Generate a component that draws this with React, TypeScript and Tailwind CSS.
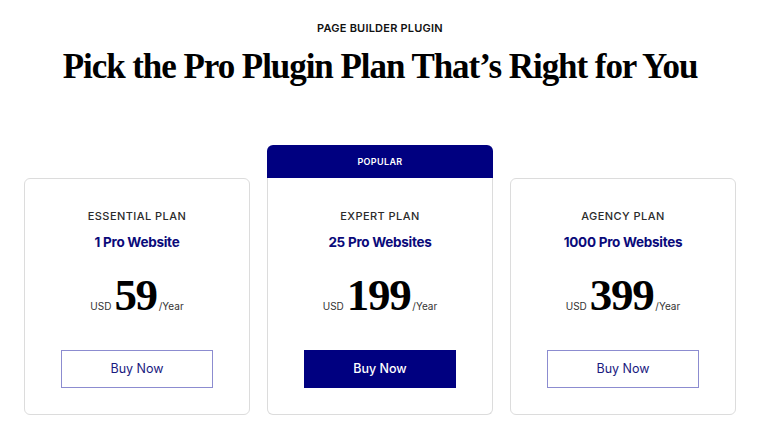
import React from 'react'

const plans = [
  { name: 'ESSENTIAL PLAN', sites: '1 Pro Website', price: '59', popular: false },
  { name: 'EXPERT PLAN', sites: '25 Pro Websites', price: '199', popular: true },
  { name: 'AGENCY PLAN', sites: '1000 Pro Websites', price: '399', popular: false },
]

const sans = "font-['Inter','Roboto',sans-serif]"
const serif = "font-['Liberation_Serif','DejaVu_Serif',serif]"

const PlanCard = ({ plan }: { plan: (typeof plans)[number] }) => {
  return (
    <div className="w-[226px] flex flex-col">
      {plan.popular && (
        <div
          className={`h-[33px] bg-[#000080] rounded-t-[6px] flex items-center justify-center text-white text-[9px] font-semibold tracking-[0.04em] ${sans}`}
        >
          POPULAR
        </div>
      )}
      <div
        className={`h-[237px] bg-white border border-[#dcdcdc] flex flex-col items-center ${
          plan.popular ? 'rounded-b-[6px] border-t-0 pt-[32px]' : 'rounded-[6px] pt-[31px]'
        }`}
      >
        <div className={`text-[11px] leading-[13px] tracking-[0.04em] text-[#2b2b2b] font-medium ${sans}`}>
          {plan.name}
        </div>
        <div className={`mt-[11px] text-[13.5px] leading-[16px] font-bold text-[#0a0a7a] tracking-[-0.02em] ${sans}`}>
          {plan.sites}
        </div>
        <div className="mt-[26px] flex items-baseline">
          <span className={`text-[10px] text-[#333] mr-[3px] ${sans}`}>USD</span>
          <span className={`text-[45px] leading-[38px] font-bold text-black tracking-[-0.03em] ${serif}`}>
            {plan.price}
          </span>
          <span className={`text-[10px] text-[#333] ml-[2px] ${sans}`}>/Year</span>
        </div>
        <button
          className={`mt-[36px] w-[152px] h-[38px] flex items-center justify-center text-[12.5px] ${sans} ${
            plan.popular
              ? 'bg-[#000080] text-white font-medium'
              : 'bg-white border border-[#8c8cd0] text-[#1a1a80]'
          }`}
        >
          Buy Now
        </button>
      </div>
    </div>
  )
}

export default function App() {
  return (
    <div className="w-[760px] h-[429px] bg-white overflow-hidden">
      <div className={`pt-[22px] text-center text-[11px] leading-[13px] font-semibold text-[#111] tracking-[0.02em] ${sans}`}>
        PAGE BUILDER PLUGIN
      </div>
      <h1
        className={`mt-[12px] text-center text-[35px] leading-[40px] font-bold text-black tracking-[-0.03em] ${serif}`}
      >
        Pick the Pro Plugin Plan That’s Right for You
      </h1>
      <div className="mt-[58px] flex items-end justify-center gap-[17px]">
        {plans.map((p) => (
          <PlanCard key={p.name} plan={p} />
        ))}
      </div>
    </div>
  )
}
